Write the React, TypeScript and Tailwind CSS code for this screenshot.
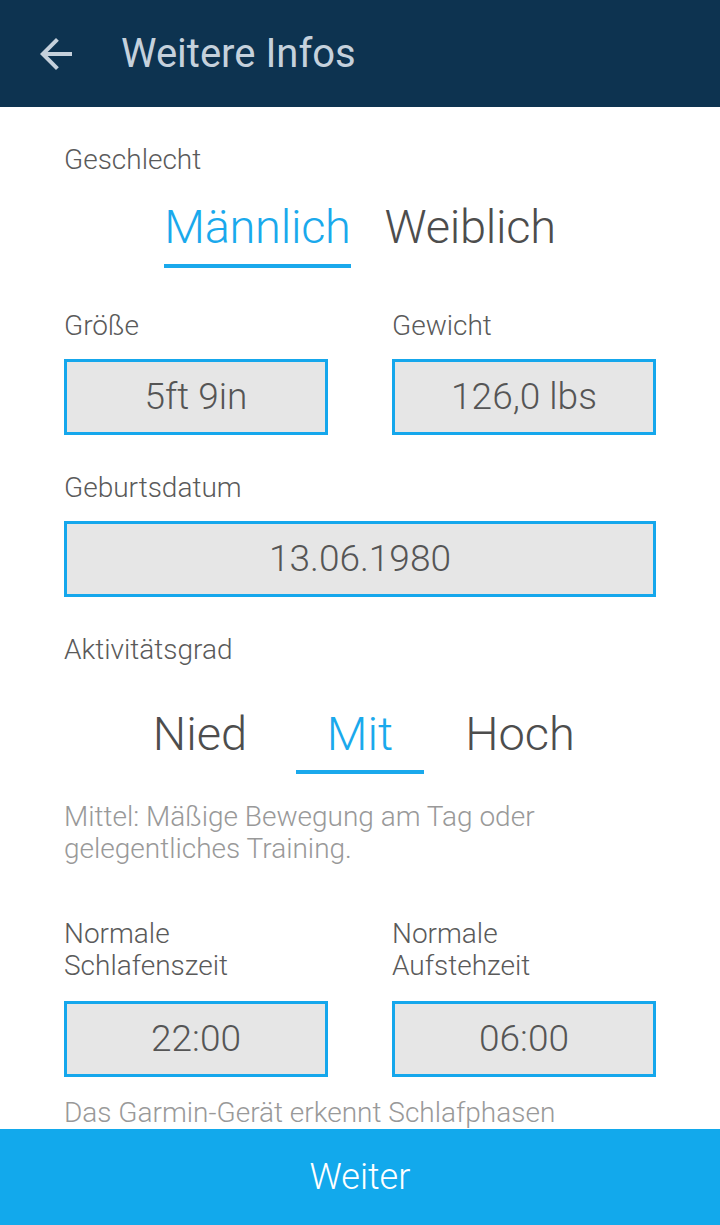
import { useState } from "react";

function Label({ children }: { children: React.ReactNode }) {
  return <div className="text-[28px] leading-[32px] font-light text-[#5a5a5a]">{children}</div>;
}

function ValueBox({ value, tall }: { value: string; tall?: boolean }) {
  return (
    <div
      className={`${tall ? "mt-[19px]" : "mt-[17px]"} flex h-[76px] items-center justify-center border-[3px] border-[#15a7ec] bg-[#e6e6e6] text-[37px] font-light text-[#555]`}
    >
      {value}
    </div>
  );
}

export default function App() {
  const [gender, setGender] = useState("m");
  const [level, setLevel] = useState(1);
  const levels = ["Nied", "Mit", "Hoch"];

  return (
    <div
      className="flex h-[1225px] w-[720px] flex-col overflow-hidden bg-white"
      style={{ fontFamily: "Roboto, 'Noto Sans', sans-serif" }}
    >
      <header className="flex h-[107px] shrink-0 items-center bg-[#0d3350]">
        <button className="ml-[32px] flex h-12 w-12 items-center justify-center">
          <svg width="48" height="48" viewBox="0 0 24 24" fill="#c5d1dc">
            <path d="M20 11H7.83l5.59-5.59L12 4l-8 8 8 8 1.41-1.41L7.83 13H20v-2z" />
          </svg>
        </button>
        <h1 className="ml-[41px] text-[40px] text-[#c5d1dc]">Weitere Infos</h1>
      </header>

      <main className="flex-1 overflow-hidden px-16 pt-[37px]">
        <Label>Geschlecht</Label>
        <div className="mt-[23px] flex justify-center gap-[34px]">
          {[
            ["m", "Männlich"],
            ["f", "Weiblich"],
          ].map(([key, text]) => (
            <button key={key} onClick={() => setGender(key)} className="flex flex-col">
              <span
                className={`text-[47px] leading-[56px] font-light tracking-[-0.3px] ${
                  gender === key ? "text-[#1aa9ec]" : "text-[#4d4d4d]"
                }`}
              >
                {text}
              </span>
              <span className={`mt-[9px] h-1 w-full ${gender === key ? "bg-[#1aa9ec]" : ""}`} />
            </button>
          ))}
        </div>

        <div className="mt-[42px] grid grid-cols-2 gap-x-16">
          <div>
            <Label>Größe</Label>
            <ValueBox value="5ft 9in" />
          </div>
          <div>
            <Label>Gewicht</Label>
            <ValueBox value="126,0 lbs" />
          </div>
        </div>

        <div className="mt-[37px]">
          <Label>Geburtsdatum</Label>
          <ValueBox value="13.06.1980" />
        </div>

        <div className="mt-[37px]">
          <Label>Aktivitätsgrad</Label>
        </div>
        <div className="mx-auto mt-[40px] grid w-[480px] grid-cols-3">
          {levels.map((l, i) => (
            <button key={l} onClick={() => setLevel(i)} className="flex flex-col items-center">
              <span
                className={`text-[47px] leading-[56px] font-light ${
                  level === i ? "text-[#1aa9ec]" : "text-[#4d4d4d]"
                }`}
              >
                {l}
              </span>
              <span className={`mt-[8px] h-1 w-[128px] ${level === i ? "bg-[#1aa9ec]" : ""}`} />
            </button>
          ))}
        </div>
        <p className="mt-[27px] text-[28px] leading-[32px] font-light text-[#999]">
          Mittel: Mäßige Bewegung am Tag oder gelegentliches Training.
        </p>

        <div className="mt-[53px] grid grid-cols-2 gap-x-16">
          <div>
            <Label>
              Normale
              <br />
              Schlafenszeit
            </Label>
            <ValueBox value="22:00" tall />
          </div>
          <div>
            <Label>
              Normale
              <br />
              Aufstehzeit
            </Label>
            <ValueBox value="06:00" tall />
          </div>
        </div>
        <p className="mt-[22px] text-[28px] leading-[28px] font-light text-[#999]">
          Das Garmin-Gerät erkennt Schlafphasen
        </p>
      </main>

      <button className="flex h-[96px] shrink-0 items-center justify-center bg-[#12a9ec] text-[36px] font-light text-white">
        Weiter
      </button>
    </div>
  );
}
